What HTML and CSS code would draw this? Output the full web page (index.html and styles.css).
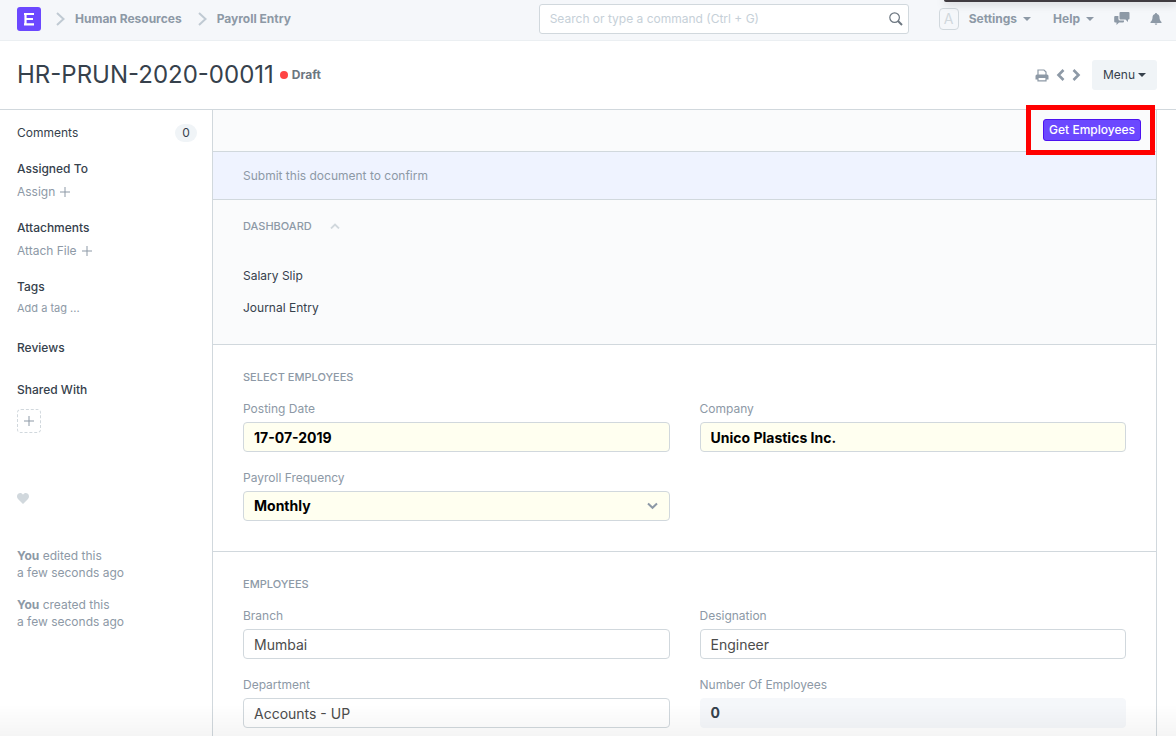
FILE: index.html
```html
<!DOCTYPE html>
<html lang="en">
<head>
<meta charset="utf-8">
<meta name="viewport" content="width=device-width, initial-scale=1">
<title>HR-PRUN-2020-00011</title>
<link rel="stylesheet" href="styles.css">
</head>
<body>
<div class="window-edge"></div>
<header class="navbar">
  <a class="logo" href="#" aria-label="Home">
    <svg width="24" height="24" viewBox="0 0 24 24"><rect width="24" height="24" rx="3" fill="#6b48ff"/><path d="M7 7h10M7.500 12H16M7 17.300h10M8.500 7v10" fill="none" stroke="#fff" stroke-width="2.200"/></svg>
  </a>
  <nav class="breadcrumb" aria-label="Breadcrumb">
    <svg class="crumb-arrow" width="9" height="14" viewBox="0 0 9 14"><path d="M1 1l6.500 6L1 13"/></svg>
    <a href="#">Human Resources</a>
    <svg class="crumb-arrow" width="9" height="14" viewBox="0 0 9 14"><path d="M1 1l6.500 6L1 13"/></svg>
    <a href="#">Payroll Entry</a>
  </nav>
  <div class="search">
    <input type="text" aria-label="Search" placeholder="Search or type a command (Ctrl + G)">
    <svg width="14" height="14" viewBox="0 0 14 14"><circle cx="5.600" cy="5.600" r="4.800" fill="none" stroke="#6c7680" stroke-width="1.200"/><path d="M9 9l4 4" stroke="#6c7680" stroke-width="2"/></svg>
  </div>
  <div class="nav-right">
    <span class="avatar">A</span>
    <button type="button" class="nav-menu">Settings <span class="caret"></span></button>
    <button type="button" class="nav-menu help">Help <span class="caret"></span></button>
    <button type="button" class="nav-icon chat" aria-label="Chat">
      <svg width="16" height="14" viewBox="0 0 16 14" fill="#8d99a6"><path d="M6.500 0h8a1 1 0 0 1 1 1v5.500a1 1 0 0 1-1 1H14V10l-2.500-2.500h-5a1 1 0 0 1-1-1V1a1 1 0 0 1 1-1z"/><path d="M1.200 4h3.200v3a1.600 1.600 0 0 0 1.600 1.600h4V9.500a1 1 0 0 1-1 1H5L2.500 13v-2.500H1.200a1 1 0 0 1-1-1V5a1 1 0 0 1 1-1z"/></svg>
    </button>
    <button type="button" class="nav-icon" aria-label="Notifications">
      <svg width="12" height="12" viewBox="0 0 12 12" fill="#8d99a6"><path d="M6 0c.6 0 1 .4 1 1 1.700.5 2.500 1.900 2.500 3.500C9.500 7 10.500 8 11.500 9v1H.5V9c1-1 2-2 2-4.500C2.500 2.900 3.300 1.500 5 1c0-.6.4-1 1-1zM4.700 10.500h2.600a1.300 1.300 0 0 1-2.600 0z"/></svg>
    </button>
  </div>
</header>

<div class="page-head">
  <h1>HR-PRUN-2020-00011</h1>
  <span class="status">Draft</span>
  <div class="page-actions">
    <button type="button" class="icon-btn" aria-label="Print">
      <svg width="14" height="13" viewBox="0 0 14 13"><path d="M3 6V1h6l2 2v3" fill="none" stroke="#8d99a6" stroke-width="1.200"/><path d="M2 5.500h10a1.500 1.500 0 0 1 1.500 1.500v3.500H.5V7A1.500 1.500 0 0 1 2 5.500z" fill="#8d99a6"/><path d="M3 8.500h8v3.400H3z" fill="#fff" stroke="#8d99a6" stroke-width="1.200"/></svg>
    </button>
    <button type="button" class="icon-btn" aria-label="Previous">
      <svg width="9" height="12" viewBox="0 0 9 12"><path d="M7.500 1l-5 5 5 5" fill="none" stroke="#8d99a6" stroke-width="2.600"/></svg>
    </button>
    <button type="button" class="icon-btn" aria-label="Next">
      <svg width="9" height="12" viewBox="0 0 9 12"><path d="M1.500 1l5 5-5 5" fill="none" stroke="#8d99a6" stroke-width="2.600"/></svg>
    </button>
    <button type="button" class="menu-btn">Menu <span class="caret"></span></button>
  </div>
</div>

<div class="layout">
  <aside class="sidebar">
    <a class="comments" href="#">Comments <span class="badge">0</span></a>
    <section class="side-group">
      <h2>Assigned To</h2>
      <button type="button" class="side-action">Assign <svg width="10" height="10" viewBox="0 0 10 10"><path d="M5 0v10M0 5h10"/></svg></button>
    </section>
    <section class="side-group">
      <h2>Attachments</h2>
      <button type="button" class="side-action">Attach File <svg width="10" height="10" viewBox="0 0 10 10"><path d="M5 0v10M0 5h10"/></svg></button>
    </section>
    <section class="side-group tags">
      <h2>Tags</h2>
      <input type="text" aria-label="Add a tag" placeholder="Add a tag ...">
    </section>
    <section class="side-group">
      <h2>Reviews</h2>
    </section>
    <section class="side-group shared">
      <h2>Shared With</h2>
      <button type="button" class="share-btn" aria-label="Share"><svg width="10" height="10" viewBox="0 0 10 10"><path d="M5 0v10M0 5h10"/></svg></button>
    </section>
    <button type="button" class="like" aria-label="Like"><svg width="12" height="11" viewBox="0 0 12 11"><path d="M6 11L1 6C-.5 4.400-.2 1.900 1.200.8 2.800-.4 5 0 6 1.800 7-.0 9.200-.4 10.800.8 12.200 1.900 12.500 4.400 11 6z" fill="#d1d8dd"/></svg></button>
    <p class="activity"><b>You</b> edited this<br>a few seconds ago</p>
    <p class="activity"><b>You</b> created this<br>a few seconds ago</p>
  </aside>

  <main class="form">
    <div class="toolbar">
      <span class="highlight"><button type="button" class="primary">Get Employees</button></span>
    </div>
    <div class="message">Submit this document to confirm</div>
    <section class="dashboard">
      <h2 class="section-title">Dashboard <svg width="10" height="6" viewBox="0 0 10 6"><path d="M1 5.500l4-4 4 4" fill="none" stroke="#d1d8dd" stroke-width="1.800"/></svg></h2>
      <div class="links">
        <a href="#">Salary Slip</a>
        <a href="#">Journal Entry</a>
      </div>
    </section>
    <section class="section">
      <h2 class="section-title">Select Employees</h2>
      <div class="fields">
        <div class="field required">
          <label for="date">Posting Date</label>
          <input id="date" type="text" value="17-07-2019">
        </div>
        <div class="field required">
          <label for="company">Company</label>
          <input id="company" type="text" value="Unico Plastics Inc.">
        </div>
        <div class="field required">
          <label for="freq">Payroll Frequency</label>
          <div class="select">
            <select id="freq"><option>Monthly</option></select>
            <svg width="11" height="8" viewBox="0 0 11 8"><path d="M1 1.500l4.500 4.300L10 1.500" fill="none" stroke="#8d99a6" stroke-width="2"/></svg>
          </div>
        </div>
      </div>
    </section>
    <section class="section">
      <h2 class="section-title">Employees</h2>
      <div class="fields">
        <div class="field">
          <label for="branch">Branch</label>
          <input id="branch" type="text" value="Mumbai">
        </div>
        <div class="field">
          <label for="designation">Designation</label>
          <input id="designation" type="text" value="Engineer">
        </div>
        <div class="field">
          <label for="department">Department</label>
          <input id="department" type="text" value="Accounts - UP">
        </div>
        <div class="field">
          <label for="count">Number Of Employees</label>
          <output id="count">0</output>
        </div>
      </div>
    </section>
  </main>
</div>
<div class="bottom-fade"></div>
</body>
</html>
```

FILE: styles.css
```css
* { box-sizing: border-box; }
body {
  margin: 0;
  min-height: 100vh;
  display: flex;
  flex-direction: column;
  font: 12px/18px Inter, sans-serif;
  color: #36414c;
  background: #fff;
}
h1, h2, p { margin: 0; }
a { color: inherit; text-decoration: none; }
svg { display: block; flex: none; }
button, input, select { font: inherit; color: inherit; }
button { border: 0; padding: 0; background: none; cursor: pointer; }

.window-edge {
  position: absolute;
  top: 0;
  right: 0;
  width: 232px;
  height: 2px;
  background: #403b40;
  border-bottom-left-radius: 4px;
  box-shadow: 0 1px 8px rgba(0, 0, 0, 0.4);
}
.bottom-fade {
  position: fixed;
  left: 0;
  right: 0;
  bottom: 0;
  height: 32px;
  background: linear-gradient(rgba(0, 0, 0, 0), rgba(0, 0, 0, 0.04));
  pointer-events: none;
}

.navbar {
  height: 41px;
  padding: 0 14px 3px 17px;
  display: flex;
  align-items: center;
  background: #f5f7fa;
  border-bottom: 1px solid #ebeff2;
  color: #8d99a6;
}
.breadcrumb {
  display: flex;
  align-items: center;
  gap: 10px;
  margin-left: 15px;
  font-weight: 700;
}
.crumb-arrow { fill: none; stroke: #c0cad3; stroke-width: 2; }
.breadcrumb a + .crumb-arrow { margin-left: 6px; }
.search {
  display: flex;
  align-items: center;
  width: 370px;
  height: 30px;
  margin-left: auto;
  padding: 0 5px 0 10px;
  background: #fff;
  border: 1px solid #d1d8dd;
  border-radius: 3px;
}
.search input { flex: 1; min-width: 0; border: 0; padding: 0; outline: 0; background: none; }
::placeholder { color: #c6d0d8; opacity: 1; }
.nav-right { display: flex; align-items: center; margin-left: 30px; }
.avatar {
  width: 20px;
  height: 22px;
  line-height: 20px;
  font-size: 14px;
  text-align: center;
  border: 1px solid #d1d8dd;
  border-radius: 4px;
  color: #d1d8dd;
}
.nav-menu { display: flex; align-items: center; gap: 6px; margin-left: 10px; font-weight: 700; }
.nav-menu.help { margin-left: 22px; }
.nav-icon { margin-left: 20px; }
.caret { border: 4px solid transparent; border-top-color: currentColor; border-bottom: 0; }

.page-head {
  height: 69px;
  padding: 0 19px 0 17px;
  display: flex;
  align-items: center;
  border-bottom: 1px solid #d1d8dd;
}
h1 { font-size: 24px; line-height: 32px; font-weight: 400; }
.status {
  display: flex;
  align-items: center;
  gap: 4px;
  margin-left: 6px;
  font-weight: 700;
  color: #6c7680;
}
.status::before { content: ""; width: 8px; height: 8px; border-radius: 50%; background: #ff4444; }
.page-actions { display: flex; align-items: center; gap: 7px; margin-left: auto; }
.menu-btn {
  display: flex;
  align-items: center;
  gap: 3px;
  height: 30px;
  margin-left: 4px;
  padding: 0 11px;
  background: #f0f4f7;
  border-radius: 3px;
}

.layout { flex: 1; display: flex; padding-right: 19px; }
.sidebar {
  flex: none;
  width: 212px;
  padding: 14px 15px 0 17px;
}
.comments { display: flex; justify-content: space-between; align-items: center; }
.badge { width: 22px; border-radius: 9px; background: #f0f4f7; text-align: center; }
.side-group { margin-top: 18px; }
.side-group h2 { font-size: 12px; line-height: 18px; font-weight: 500; }
.side-action { display: flex; align-items: center; gap: 5px; margin-top: 5px; color: #8d99a6; }
.side-action svg, .share-btn svg { fill: none; stroke: #8d99a6; }
.tags input {
  display: block;
  width: 100%;
  height: 18px;
  margin-top: 3px;
  margin-bottom: 22px;
  padding: 0;
  border: 0;
  outline: 0;
  font-size: 11px;
}
.tags input::placeholder { color: #8d99a6; }
.shared { margin-top: 24px; }
.share-btn {
  width: 24px;
  height: 24px;
  margin-top: 10px;
  display: grid;
  place-items: center;
  border: 1px dashed #d1d8dd;
  border-radius: 4px;
}
.like { display: block; margin: 60px 0 43px; }
.activity { margin-bottom: 15px; line-height: 17px; color: #8d99a6; }
.activity b { font-weight: 700; }

.form { flex: 1; min-width: 0; border: 1px solid #d1d8dd; border-width: 0 1px; }
.toolbar {
  height: 42px;
  padding: 0 15px 2px 0;
  display: flex;
  align-items: center;
  justify-content: flex-end;
  background: #fafbfc;
  border-bottom: 1px solid #d1d8dd;
}
.highlight { position: relative; display: flex; }
.highlight::after {
  content: "";
  position: absolute;
  inset: -14px -14px -14px -17px;
  border: 5px solid #ff0000;
  pointer-events: none;
}
.primary {
  height: 22px;
  padding: 0 5px;
  background: #6b48ff;
  border: 1px solid #4d12f0;
  border-radius: 3px;
  color: #fff;
  font-weight: 500;
}
.message {
  padding: 15px 30px 14px;
  background: #eff3ff;
  border-bottom: 1px solid #d1d8dd;
  color: #8d99a6;
}
.section-title {
  display: flex;
  align-items: center;
  gap: 18px;
  font-size: 11px;
  line-height: 18px;
  font-weight: 500;
  text-transform: uppercase;
  color: #8d99a6;
}
.dashboard { padding: 17px 30px 20px; background: #fafbfc; border-bottom: 1px solid #d1d8dd; }
.links { display: flex; flex-direction: column; align-items: flex-start; margin-top: 25px; line-height: 32px; }
.section { padding: 23px 30px 30px; }
.section + .section { padding-bottom: 8px; border-top: 1px solid #d1d8dd; }
.fields { display: grid; grid-template-columns: 1fr 1fr; gap: 17px 30px; margin-top: 14px; }
.field label { display: block; margin-bottom: 4px; color: #8d99a6; }
.field input, .field select, .field output {
  display: block;
  width: 100%;
  height: 30px;
  padding: 0 10px;
  border: 1px solid #d1d8dd;
  border-radius: 4px;
  background: #fff;
  font-size: 14px;
  color: #4c4c4c;
}
.field output {
  border-color: #f5f7fa;
  background: #f5f7fa;
  color: #36414c;
  font-weight: 700;
  line-height: 28px;
}
.required input, .required select { background: #fffff0; color: #000; font-weight: 700; }
.select { display: grid; align-items: center; }
.select select, .select svg { grid-area: 1 / 1; }
.select select { appearance: none; }
.select svg { justify-self: end; margin-right: 12px; pointer-events: none; }
```
